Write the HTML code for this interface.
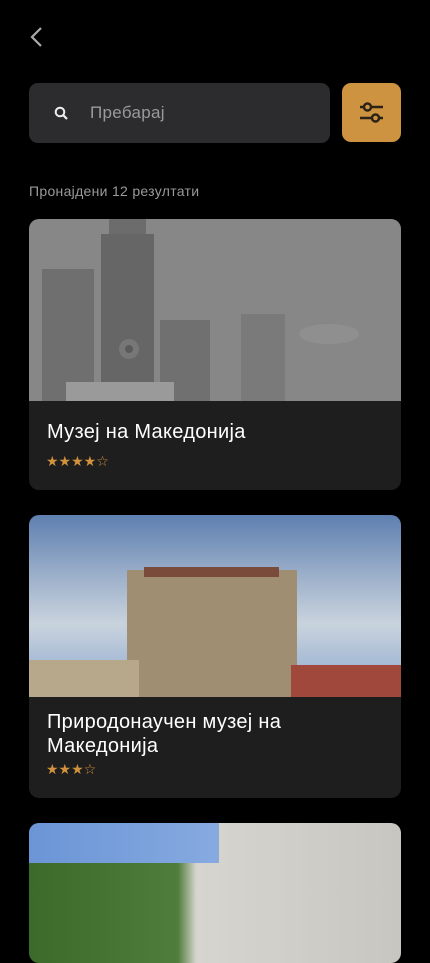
<!DOCTYPE html>
<html><head><meta charset="utf-8"><style>
*{margin:0;padding:0;box-sizing:border-box}
body{width:430px;height:932px;background:#000;font-family:"Liberation Sans","DejaVu Sans",sans-serif;overflow:hidden;position:relative;color:#fff}
.abs{position:absolute}
.card{position:absolute;left:29px;width:372px;background:#1e1e1e;border-radius:10px;overflow:hidden}
.title{position:absolute;left:18px;font-size:20px;color:#fff;line-height:24px;letter-spacing:0.3px}
.stars{position:absolute;left:17px;color:#d2923c;font-size:14px;letter-spacing:0}
</style></head><body>
<svg class="abs" style="left:28px;top:26px" width="16" height="22" viewBox="0 0 16 22"><path d="M13 2 L4 11 L13 20" stroke="#aaa" stroke-width="2.2" fill="none"/></svg>
<div class="abs" style="left:29px;top:83px;width:301px;height:60px;background:#2c2c2e;border-radius:9px"></div>
<svg class="abs" style="left:54px;top:106px" width="16" height="16" viewBox="0 0 16 16"><circle cx="6" cy="6" r="4.3" stroke="#eee" stroke-width="2" fill="none"/><path d="M9.2 9.2 L13 13" stroke="#eee" stroke-width="2.2"/></svg>
<div class="abs" style="left:90px;top:103px;font-size:17px;color:#9a9a9a;letter-spacing:0.3px">Пребарај</div>
<div class="abs" style="left:342px;top:83px;width:59px;height:59px;background:#cd9340;border-radius:9px"></div>
<svg class="abs" style="left:358px;top:100px" width="28" height="26" viewBox="0 0 28 26"><path d="M2 7H6M13 7H25M2 18H14M21 18H25" stroke="#2a2215" stroke-width="2.4"/><circle cx="9.5" cy="7" r="3.5" stroke="#2a2215" stroke-width="2.4" fill="none"/><circle cx="17.5" cy="18" r="3.5" stroke="#2a2215" stroke-width="2.4" fill="none"/></svg>
<div class="abs" style="left:29px;top:183px;font-size:14px;color:#9a9a9a;letter-spacing:0.3px">Пронајдени 12 резултати</div>

<div class="card" style="top:219px;height:271px">
<svg width="372" height="182" viewBox="0 0 372 182" style="display:block"><rect width="372" height="182" fill="#878787"/>
<rect x="13" y="50" width="52" height="132" fill="#6f6f6f"/>
<rect x="72" y="15" width="53" height="167" fill="#666"/>
<rect x="80" y="-10" width="37" height="25" fill="#6c6c6c"/>
<rect x="131" y="101" width="50" height="81" fill="#707070"/>
<rect x="212" y="95" width="44" height="87" fill="#7a7a7a"/>
<rect x="37" y="163" width="108" height="19" fill="#9a9a9a"/>
<circle cx="100" cy="130" r="10" fill="#777"/><circle cx="100" cy="130" r="4" fill="#5a5a5a"/>
<ellipse cx="300" cy="115" rx="30" ry="10" fill="#8f8f8f"/>
</svg>
<div class="title" style="top:201px">Музеј на Македонија</div>
<div class="stars" style="top:234px">★★★★☆</div>
</div>

<div class="card" style="top:515px;height:283px">
<div style="height:182px;background:linear-gradient(180deg,#5e7fb0 0%,#9fb2cb 35%,#c9d3dd 60%,#8aa7cf 100%);position:relative">
<div class="abs" style="left:98px;top:55px;width:170px;height:127px;background:#a08e73"></div>
<div class="abs" style="left:115px;top:52px;width:135px;height:10px;background:#7a4a3a"></div>
<div class="abs" style="left:0;top:145px;width:110px;height:37px;background:#b7a88c"></div>
<div class="abs" style="left:262px;top:150px;width:110px;height:32px;background:#a0483c"></div>
</div>
<div class="title" style="top:195px">Природонаучен музеј на<br>Македонија</div>
<div class="stars" style="top:246px">★★★☆</div>
</div>

<div class="card" style="top:823px;height:140px;background:linear-gradient(90deg,#3b6a2a 0%,#4f7d3a 40%,#d7d5cf 45%,#c8c6c0 100%)">
<div class="abs" style="left:0;top:0;width:190px;height:40px;background:linear-gradient(90deg,#6b95d6,#86aae0)"></div>
</div>
</body></html>
